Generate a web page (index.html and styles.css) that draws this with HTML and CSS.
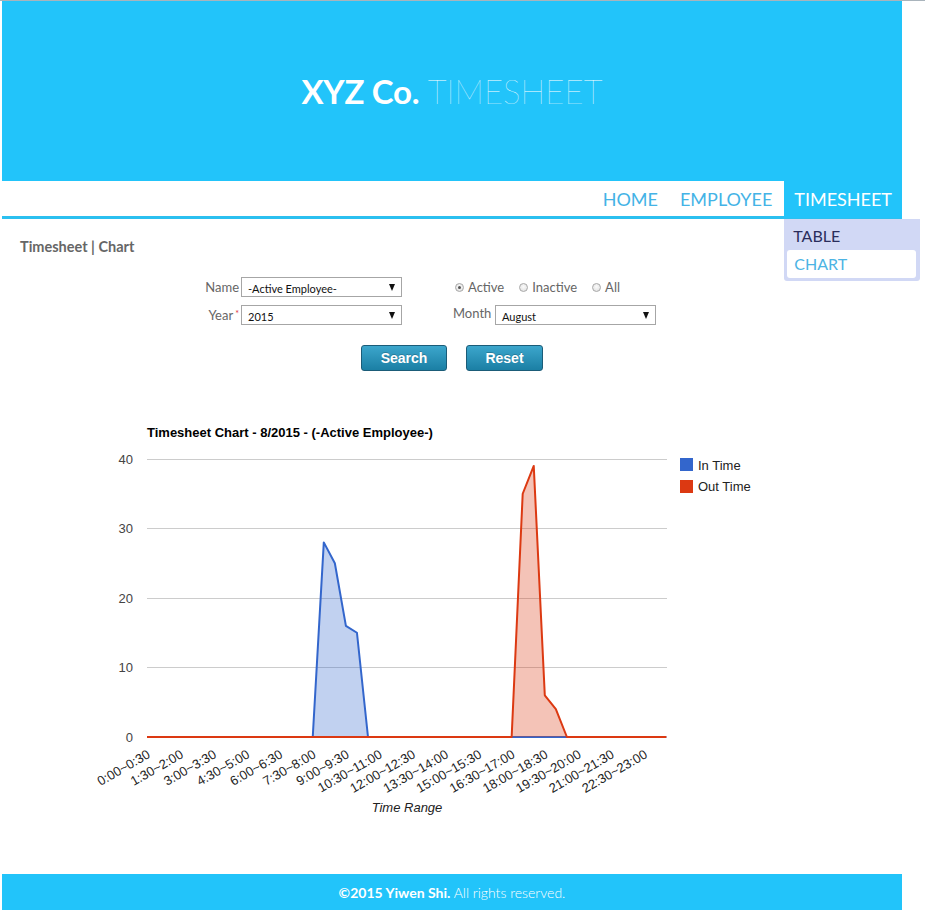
FILE: index.html
```html
<!DOCTYPE html>
<html lang="en">
<head>
<meta charset="utf-8">
<title>XYZ Co. Timesheet</title>
<link rel="stylesheet" href="styles.css">
</head>
<body>
<div class="page">
  <header class="masthead">
    <h1 class="brand"><span class="brand-strong">XYZ Co.</span> <span class="brand-light">TIMESHEET</span></h1>
  </header>
  <nav class="topnav">
    <a class="nav-item" href="#">HOME</a>
    <a class="nav-item" href="#">EMPLOYEE</a>
    <div class="nav-item nav-active">TIMESHEET
      <div class="dropdown">
        <a class="drop-item" href="#">TABLE</a>
        <a class="drop-item drop-current" href="#">CHART</a>
      </div>
    </div>
  </nav>
  <main class="content">
    <div class="crumb">Timesheet | Chart</div>
    <div class="filters">
      <div class="lbl lbl-right">Name</div>
      <div class="select sel-name"><span class="sel-text">-Active Employee-</span><span class="caret"></span></div>
      <div class="radios">
        <span class="radio checked"></span><span class="radio-text">Active</span>
        <span class="radio"></span><span class="radio-text">Inactive</span>
        <span class="radio"></span><span class="radio-text">All</span>
      </div>
      <div class="lbl lbl-right">Year<sup class="req">*</sup></div>
      <div class="select"><span class="sel-text">2015</span><span class="caret"></span></div>
      <div class="lbl lbl-month">Month</div>
      <div class="select sel-month"><span class="sel-text">August</span><span class="caret"></span></div>
    </div>
    <div class="actions">
      <button class="btn btn-search" type="button">Search</button>
      <button class="btn btn-reset" type="button">Reset</button>
    </div>
    <div class="chart-wrap">
      <svg class="chart" width="900" height="474" viewBox="0 0 900 474">
        <g transform="translate(-2,-400)">
          <text class="c-title" x="147" y="437">Timesheet Chart - 8/2015 - (-Active Employee-)</text>
          <g class="grid">
            <line x1="147" y1="459.5" x2="667" y2="459.5"/>
            <line x1="147" y1="528.5" x2="667" y2="528.5"/>
            <line x1="147" y1="598.5" x2="667" y2="598.5"/>
            <line x1="147" y1="667.5" x2="667" y2="667.5"/>
          </g>
          <g class="ylab">
            <text x="133" y="464">40</text>
            <text x="133" y="533">30</text>
            <text x="133" y="603">20</text>
            <text x="133" y="672">10</text>
            <text x="133" y="742">0</text>
          </g>
          <path class="area-blue" d="M147,737 L312.75,737 L323.8,542.4 L334.85,563.25 L345.9,625.8 L356.95,632.75 L368,737 L666.35,737 Z"/>
          <path class="line-blue" d="M147,737 L312.75,737 L323.8,542.4 L334.85,563.25 L345.9,625.8 L356.95,632.75 L368,737 L666.35,737"/>
          <path class="area-red" d="M147,737 L511.65,737 L522.7,493.75 L533.75,465.95 L544.8,695.3 L555.85,709.2 L566.9,737 L666.35,737 Z"/>
          <path class="line-red" d="M147,737 L511.65,737 L522.7,493.75 L533.75,465.95 L544.8,695.3 L555.85,709.2 L566.9,737 L666.35,737"/>
          <g class="xlab">
            <text transform="translate(151,757) rotate(-30)">0:00~0:30</text>
            <text transform="translate(184.15,757) rotate(-30)">1:30~2:00</text>
            <text transform="translate(217.3,757) rotate(-30)">3:00~3:30</text>
            <text transform="translate(250.45,757) rotate(-30)">4:30~5:00</text>
            <text transform="translate(283.6,757) rotate(-30)">6:00~6:30</text>
            <text transform="translate(316.75,757) rotate(-30)">7:30~8:00</text>
            <text transform="translate(349.9,757) rotate(-30)">9:00~9:30</text>
            <text transform="translate(383.05,757) rotate(-30)">10:30~11:00</text>
            <text transform="translate(416.2,757) rotate(-30)">12:00~12:30</text>
            <text transform="translate(449.35,757) rotate(-30)">13:30~14:00</text>
            <text transform="translate(482.5,757) rotate(-30)">15:00~15:30</text>
            <text transform="translate(515.65,757) rotate(-30)">16:30~17:00</text>
            <text transform="translate(548.8,757) rotate(-30)">18:00~18:30</text>
            <text transform="translate(581.95,757) rotate(-30)">19:30~20:00</text>
            <text transform="translate(615.1,757) rotate(-30)">21:00~21:30</text>
            <text transform="translate(648.25,757) rotate(-30)">22:30~23:00</text>
          </g>
          <text class="x-title" x="407" y="812">Time Range</text>
          <rect x="680" y="458" width="13" height="13" fill="#3366cc"/>
          <text class="legend" x="698" y="470">In Time</text>
          <rect x="680" y="480" width="13" height="13" fill="#dc3912"/>
          <text class="legend" x="698" y="491">Out Time</text>
        </g>
      </svg>
    </div>
  </main>
  <footer class="footer"><strong>©2015 Yiwen Shi.</strong> All rights reserved.</footer>
</div>
</body>
</html>
```
FILE: styles.css
```css
* { box-sizing: border-box; }
html, body { margin: 0; padding: 0; background: #fff; }
body {
  border-top: 1px solid #a9b4bc;
  font-family: Lato, "Open Sans", sans-serif;
}
.page {
  width: 900px;
  margin-left: 2px;
}
.masthead {
  height: 180px;
  background: #22c4fa;
  display: flex;
  align-items: center;
  justify-content: center;
}
.brand {
  margin: 0;
  padding-top: 0;
  font-size: 33px;
  line-height: 40px;
  color: #fff;
  font-weight: normal;
}
.brand-strong { font-weight: 700; letter-spacing: -0.3px; }
.brand-light { font-weight: 200; }

.topnav {
  position: relative;
  height: 38px;
  border-bottom: 3px solid #2bc0f0;
  display: flex;
  justify-content: flex-end;
  gap: 2px;
}
.nav-item {
  position: relative;
  display: block;
  height: 35px;
  padding: 0 10px;
  font-size: 18px;
  line-height: 36px;
  color: #44b3e6;
  text-decoration: none;
}
.nav-active {
  background: #22c4fa;
  color: #fff;
  height: 37px;
}
.dropdown {
  position: absolute;
  left: 0;
  top: 38px;
  width: 136px;
  padding: 3px 4px 3px 3px;
  background: #d1d8f5;
  border-radius: 0 0 3px 3px;
  z-index: 2;
}
.drop-item {
  display: block;
  height: 28px;
  padding-left: 6px;
  font-size: 16px;
  line-height: 28px;
  color: #2a2d5c;
  text-decoration: none;
}
.drop-current {
  background: #fff;
  color: #4cb4e4;
  border-radius: 3px;
  padding-left: 7px;
}

.content {
  height: 655px;
  padding-top: 19px;
}
.crumb {
  margin-left: 18px;
  font-size: 14.5px;
  line-height: 18px;
  font-weight: 700;
  color: #666;
}
.filters {
  margin-top: 21px;
  padding-left: 197px;
  display: grid;
  grid-template-columns: 42px 161px 51px 42px 161px;
  grid-auto-rows: 20px;
  row-gap: 8px;
  font-size: 13px;
  color: #666;
}
.lbl { line-height: 20px; white-space: nowrap; }
.lbl-right { grid-column: 1; text-align: right; padding-right: 2px; }
.lbl-month { grid-column: 4; line-height: 17px; }
.sel-month { grid-column: 5; }
.req { color: #e0323a; font-size: 9px; vertical-align: top; position: relative; top: -1px; margin-left: 2px; }
.select {
  display: flex;
  align-items: center;
  justify-content: space-between;
  height: 20px;
  border: 1px solid #a6a6a6;
  background: #fff;
  padding: 0 6px 0 6px;
  color: #111;
  font-size: 11px;
}
.sel-text { padding-top: 2px; }
.caret {
  width: 0; height: 0;
  border-left: 3.5px solid transparent;
  border-right: 3.5px solid transparent;
  border-top: 7px solid #111;
}
.radios {
  grid-column: 4 / 6;
  display: flex;
  align-items: center;
  padding-left: 2px;
}
.radio {
  width: 9px; height: 9px;
  border-radius: 50%;
  border: 1px solid #a8a8a8;
  background: radial-gradient(circle at 50% 40%, #fbfbfb, #dcdcdc);
  position: relative;
  margin-right: 4px;
}
.radio.checked::after {
  content: "";
  position: absolute;
  left: 2px; top: 2px;
  width: 3px; height: 3px;
  border-radius: 50%;
  background: #555;
}
.radio-text { margin-right: 15px; line-height: 20px; }

.actions {
  margin-top: 20px;
  display: flex;
  justify-content: center;
  gap: 19px;
}
.btn {
  height: 26px;
  border: 1px solid #1b5c78;
  border-radius: 3px;
  background: linear-gradient(#3ca6cc, #1b7fa4);
  color: #fff;
  font-family: "Liberation Sans", Arial, sans-serif;
  font-weight: 700;
  font-size: 14px;
  padding: 0;
  text-shadow: 0 -1px 0 rgba(0,0,0,0.2);
}
.btn-search { width: 86px; }
.btn-reset { width: 77px; }

.chart-wrap { margin-top: 29px; height: 258px; }
.chart { display: block; overflow: visible; font-family: "Liberation Sans", Arial, sans-serif; }
.c-title { font-size: 13px; font-weight: 700; fill: #000; }
.grid line { stroke: #cccccc; stroke-width: 1; }
.ylab text { font-size: 13px; fill: #444; text-anchor: end; }
.xlab text { font-size: 13px; fill: #222; text-anchor: end; }
.x-title { font-size: 13px; font-style: italic; fill: #222; text-anchor: middle; }
.legend { font-size: 13px; fill: #222; }
.area-blue { fill: #3366cc; fill-opacity: 0.3; stroke: none; }
.area-red { fill: #dc3912; fill-opacity: 0.3; stroke: none; }
.line-blue { fill: none; stroke: #3366cc; stroke-width: 2; stroke-linejoin: round; }
.line-red { fill: none; stroke: #dc3912; stroke-width: 2; stroke-linejoin: round; }

.footer {
  height: 36px;
  background: #22c4fa;
  color: #fff;
  text-align: center;
  font-size: 14px;
  line-height: 37px;
  font-weight: 300;
}
.footer strong { font-weight: 700; }
```
